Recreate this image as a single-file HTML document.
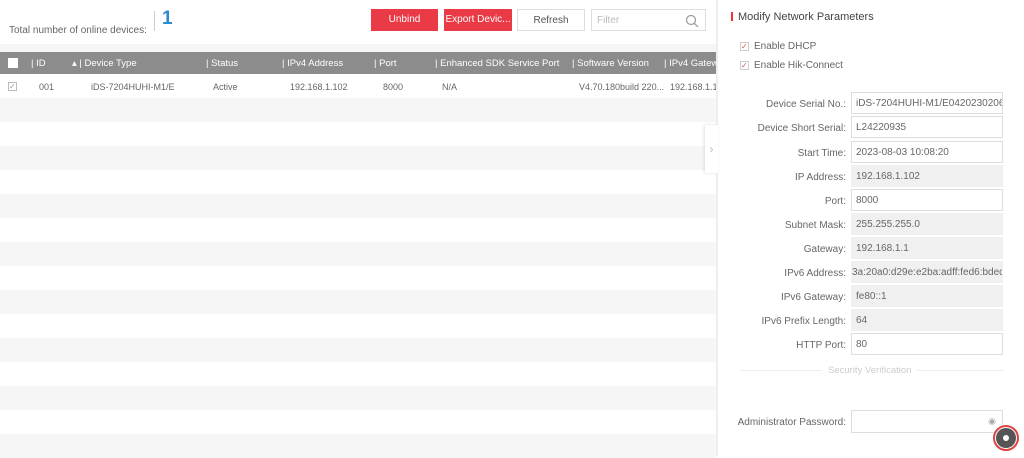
<!DOCTYPE html><html><head><style>
*{margin:0;padding:0;box-sizing:border-box}
body{width:1024px;height:456px;overflow:hidden;background:#fff;font-family:"Liberation Sans",sans-serif;font-size:9.5px;color:#555;position:relative}
.a{position:absolute}
.btn{position:absolute;top:9px;height:22px;line-height:22px;text-align:center;font-size:10px}
.row{position:absolute;left:0;width:716px;height:24px;overflow:hidden}
.hd span{position:absolute;top:6px;color:#fff;font-size:9.5px;white-space:nowrap}
.r1 span{position:absolute;top:8px;color:#666;font-size:9px;white-space:nowrap}
.lbl{position:absolute;right:178px;width:150px;text-align:right;font-size:10px;color:#666}
.fld{position:absolute;left:851px;width:152px;height:22px;border:1px solid #ddd;padding-left:4px;line-height:21px;font-size:10px;color:#666;white-space:nowrap;overflow:hidden}
.g{background:#f0f0f0;border-color:#f0f0f0}
</style></head><body>
<div class="a" style="left:9px;top:25px;font-size:10px;color:#666">Total number of online devices:</div>
<div class="a" style="left:154px;top:11px;width:1px;height:20px;background:#ccc"></div>
<div class="a" style="left:162px;top:8px;font-size:19px;font-weight:bold;color:#2a8bd0">1</div>
<div class="btn" style="left:371px;width:67px;background:#ea3a45;color:#fff">Unbind</div>
<div class="btn" style="left:444px;width:68px;background:#ea3a45;color:#fff">Export Devic...</div>
<div class="btn" style="left:517px;width:68px;border:1px solid #ddd;color:#555">Refresh</div>
<div class="btn" style="left:591px;width:115px;border:1px solid #ddd;color:#bbb;text-align:left;padding-left:5px">Filter
<svg class="a" style="right:6px;top:4px" width="14" height="14" viewBox="0 0 14 14"><circle cx="6" cy="6" r="4.5" fill="none" stroke="#999" stroke-width="1.2"/><path d="M9.3 9.3L13 13" stroke="#999" stroke-width="1.2"/></svg></div>
<div class="a" style="left:0;top:44px;width:716px;height:8px;background:#f6f6f6"></div>
<div class="row hd" style="top:52px;height:22px;background:#8c8c8c">
<div class="a" style="left:8px;top:6px;width:10px;height:10px;background:#fff"></div>
<span style="left:31px">| ID</span><span style="left:72px">▴ | Device Type</span><span style="left:206px">| Status</span><span style="left:282px">| IPv4 Address</span><span style="left:374px">| Port</span><span style="left:435px">| Enhanced SDK Service Port</span><span style="left:572px">| Software Version</span><span style="left:664px">| IPv4 Gatew</span></div>
<div class="row r1" style="top:74px">
<div class="a" style="left:8px;top:8px;width:9px;height:9px;border:1px solid #bbb;font-size:8px;line-height:7px;color:#999">✓</div>
<span style="left:39px">001</span><span style="left:91px">iDS-7204HUHI-M1/E</span><span style="left:213px">Active</span><span style="left:290px">192.168.1.102</span><span style="left:383px">8000</span><span style="left:442px">N/A</span><span style="left:579px">V4.70.180build 220...</span><span style="left:670px">192.168.1.1</span></div>
<div class="row" style="top:98px;background:#f6f6f6"></div>
<div class="row" style="top:146px;background:#f6f6f6"></div>
<div class="row" style="top:194px;background:#f6f6f6"></div>
<div class="row" style="top:242px;background:#f6f6f6"></div>
<div class="row" style="top:290px;background:#f6f6f6"></div>
<div class="row" style="top:338px;background:#f6f6f6"></div>
<div class="row" style="top:386px;background:#f6f6f6"></div>
<div class="row" style="top:434px;background:#f6f6f6"></div>
<div class="a" style="left:716px;top:0;width:2px;height:456px;background:#eee"></div>
<div class="a" style="left:705px;top:125px;width:13px;height:48px;background:#fff;box-shadow:-1px 0 3px #ddd;color:#bbb;font-size:12px;line-height:48px;text-align:center">›</div>
<div class="a" style="left:731px;top:12px;width:2px;height:9px;background:#e33"></div>
<div class="a" style="left:738px;top:11px;font-size:11px;color:#444">Modify Network Parameters</div>
<div class="a" style="left:740px;top:42px;width:9px;height:9px;border:1px solid #ccc;font-size:8px;line-height:7px;color:#d55">✓</div>
<div class="a" style="left:754px;top:41px;font-size:10px;color:#666">Enable DHCP</div>
<div class="a" style="left:740px;top:61px;width:9px;height:9px;border:1px solid #ccc;font-size:8px;line-height:7px;color:#d55">✓</div>
<div class="a" style="left:754px;top:60px;font-size:10px;color:#666">Enable Hik-Connect</div>
<div class="lbl" style="top:99px">Device Serial No.:</div><div class="fld" style="top:92px">iDS-7204HUHI-M1/E0420230206C</div>
<div class="lbl" style="top:123px">Device Short Serial:</div><div class="fld" style="top:116px">L24220935</div>
<div class="lbl" style="top:148px">Start Time:</div><div class="fld" style="top:141px">2023-08-03 10:08:20</div>
<div class="lbl" style="top:172px">IP Address:</div><div class="fld g" style="top:165px">192.168.1.102</div>
<div class="lbl" style="top:196px">Port:</div><div class="fld" style="top:189px">8000</div>
<div class="lbl" style="top:220px">Subnet Mask:</div><div class="fld g" style="top:213px">255.255.255.0</div>
<div class="lbl" style="top:244px">Gateway:</div><div class="fld g" style="top:237px">192.168.1.1</div>
<div class="lbl" style="top:268px">IPv6 Address:</div><div class="fld g" style="top:261px;padding-left:0">3a:20a0:d29e:e2ba:adff:fed6:bded</div>
<div class="lbl" style="top:292px">IPv6 Gateway:</div><div class="fld g" style="top:285px">fe80::1</div>
<div class="lbl" style="top:316px">IPv6 Prefix Length:</div><div class="fld g" style="top:309px">64</div>
<div class="lbl" style="top:340px">HTTP Port:</div><div class="fld" style="top:333px">80</div>
<div class="a" style="left:740px;top:370px;width:264px;height:1px;background:#eee"></div>
<div class="a" style="left:822px;top:365px;padding:0 6px;background:#fff;font-size:9.5px;color:#ccc">Security Verification</div>
<div class="lbl" style="top:417px">Administrator Password:</div><div class="fld" style="top:410px;height:23px"><span class="a" style="right:6px;top:0;color:#aaa;font-size:9px">◉</span></div>
<div class="a" style="left:993px;top:425px;width:26px;height:26px;border-radius:50%;border:2px solid #d44;background:#fff"></div>
<div class="a" style="left:996px;top:428px;width:20px;height:20px;border-radius:50%;background:#555"></div>
<div class="a" style="left:1003px;top:435px;width:6px;height:6px;border-radius:50%;background:#fff"></div>
</body></html>
